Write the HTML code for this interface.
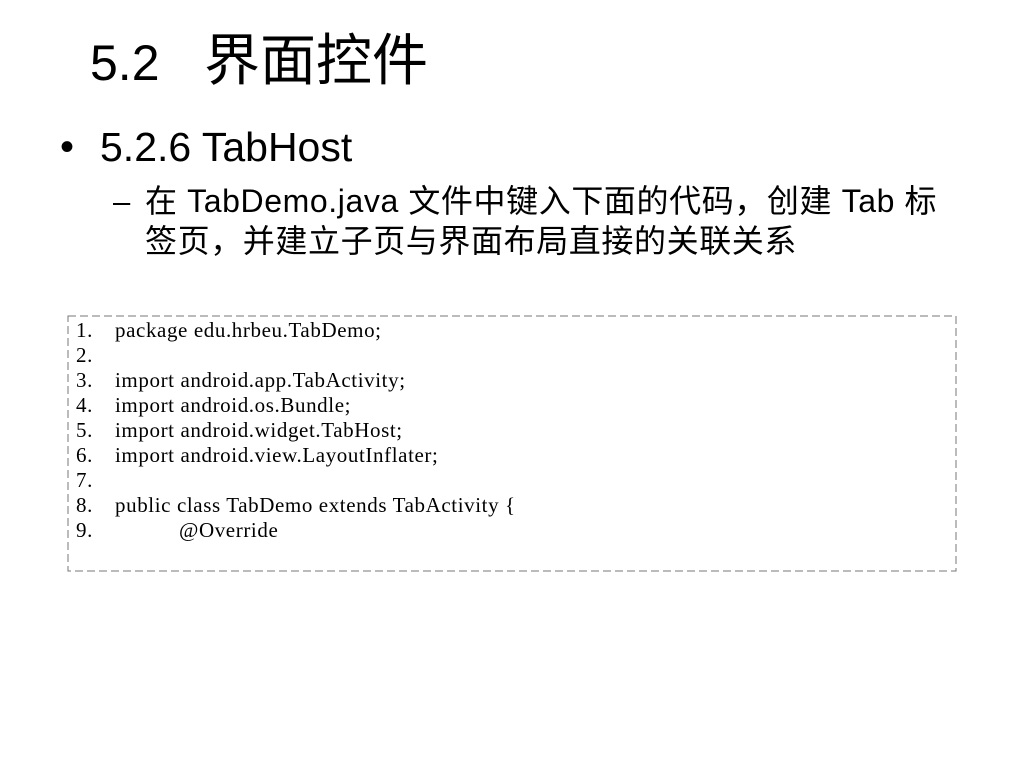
<!DOCTYPE html>
<html><head><meta charset="utf-8"><style>
body{margin:0;width:1024px;height:768px;background:#fff;position:relative;overflow:hidden;font-family:"Liberation Sans","Noto Sans CJK SC",sans-serif;color:#000}
.a{position:absolute;white-space:nowrap}
.code{position:absolute;left:68px;top:318px;width:886px;height:254px;font-family:"Liberation Serif",serif;font-size:21px;letter-spacing:0.6px}
.code div{position:absolute;left:8px;height:25px;line-height:25px;white-space:nowrap}
.code span{position:absolute;left:39px;white-space:nowrap}
</style></head><body>
<div class="a" style="left:90px;top:30px;font-size:50px;line-height:66px">5.2</div>
<div class="a" style="left:204px;top:26px;font-size:56px;line-height:70px">界面控件</div>
<div class="a" style="left:60px;top:124px;font-size:40px;line-height:46px">•</div>
<div class="a" style="left:100px;top:124px;font-size:41px;line-height:46px">5.2.6 TabHost</div>
<div class="a" style="left:113px;top:182px;font-size:31px;line-height:40px">–</div>
<div class="a" style="left:145px;top:181px;font-size:32px;line-height:40px;letter-spacing:0.6px">在 TabDemo.java 文件中键入下面的代码，创建 Tab 标<br>签页，并建立子页与界面布局直接的关联关系</div>
<svg class="a" style="left:67px;top:315px" width="891" height="258"><rect x="1" y="1" width="888" height="255" fill="none" stroke="#777" stroke-width="1" stroke-dasharray="8,4"/></svg>
<div class="code">
<div style="top:0">1.<span>package edu.hrbeu.TabDemo;</span></div>
<div style="top:25px">2.</div>
<div style="top:50px">3.<span>import android.app.TabActivity;</span></div>
<div style="top:75px">4.<span>import android.os.Bundle;</span></div>
<div style="top:100px">5.<span>import android.widget.TabHost;</span></div>
<div style="top:125px">6.<span>import android.view.LayoutInflater;</span></div>
<div style="top:150px">7.</div>
<div style="top:175px">8.<span>public class TabDemo extends TabActivity {</span></div>
<div style="top:200px">9.<span style="left:103px">@Override</span></div>
</div>
</body></html>
